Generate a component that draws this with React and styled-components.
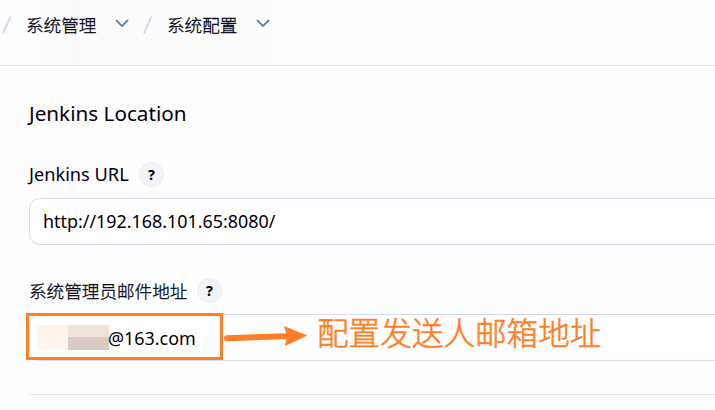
import styled, { createGlobalStyle } from 'styled-components'

const GlobalStyle = createGlobalStyle`
  * {
    box-sizing: border-box;
  }

  body {
    margin: 0;
    background: #fdfdfe;
    color: #14141f;
    font-family: "Noto Sans", "Noto Sans CJK SC", sans-serif;
  }
`

const Page = styled.div`
  height: 410px;
  overflow: hidden;
`

const Breadcrumbs = styled.header`
  display: flex;
  align-items: center;
  height: 66px;
  padding: 0 0 16px 2px;
  border-bottom: 1px solid #e4e6ec;
  background: linear-gradient(90deg, #fdfdfe 35px, #fafafa 70px, #fbfbfb 130px, #fcfcfc 200px, #fcfcfc 275px, #fdfdfe 276px);
`

const Crumb = styled.div`
  display: flex;
  align-items: center;
  width: 141px;
`

const Slash = styled.svg`
  width: 10px;
  height: 20px;
  margin-right: 14px;
`

const CrumbName = styled.span`
  width: 71px;
  font: 300 17.6px/26px "Noto Sans CJK SC", sans-serif;
  color: #000010;
  white-space: nowrap;
  -webkit-text-stroke: 0.3px #000010;
`

const Chevron = styled.svg`
  width: 14px;
  height: 9px;
  margin: 0 0 2px 18px;
`

const Main = styled.main`
  width: 760px;
  padding: 33px 0 0 29px;
`

const Title = styled.h1`
  height: 28px;
  margin: 0 0 35px;
  font-size: 20.7px;
  font-weight: 400;
  line-height: 28px;
  color: #000010;
`

const Label = styled.label`
  display: flex;
  align-items: center;
  height: 25px;
  margin-bottom: 11px;
  color: #000010;
`

const LabelText = styled.span`
  width: ${({ $width }) => $width};
  padding-bottom: 2px;
  font-size: 18.2px;
  white-space: nowrap;
`

const ChineseLabelText = styled(LabelText)`
  padding-bottom: 0;
  font: 300 17.6px/26px "Noto Sans CJK SC", sans-serif;
  -webkit-text-stroke: 0.3px #000010;
`

const Help = styled.span`
  display: flex;
  align-items: center;
  justify-content: center;
  width: 25px;
  height: 25px;
  border: 1px solid #e9edf2;
  border-radius: 50%;
  background: #f1f4f8;
  font: 700 14.5px/1 "Noto Sans", sans-serif;
`

const Field = styled.div`
  position: relative;
  display: flex;
  align-items: center;
  height: 47px;
  margin-bottom: 33px;
  padding-left: ${({ $indent }) => $indent};
  border: 1px solid #d4dbea;
  border-radius: 11px;
  background: #fff;
`

const Value = styled.span`
  padding-bottom: ${({ $lift }) => $lift || 0};
  font-size: 17.9px;
  line-height: 26px;
  color: #000;
`

const Mask = styled.span`
  display: grid;
  grid-template: 12px 13px / 31px 41px;
  margin-right: -1px;
`

const MaskCell = styled.span`
  background: ${({ $color }) => $color};
`

const Highlight = styled.div`
  position: absolute;
  top: -2px;
  left: -4px;
  width: 197px;
  height: 47px;
  border: 3px solid #ff7f27;
`

const Arrow = styled.svg`
  position: absolute;
  top: 10px;
  left: 193px;
  width: 86px;
  height: 24px;
`

const Note = styled.span`
  position: absolute;
  top: -6px;
  left: 287px;
  font: 300 31.6px/44px "Noto Sans CJK SC", sans-serif;
  color: #ff7f27;
  white-space: nowrap;
  -webkit-text-stroke: 0.6px #ff7f27;
`

const Divider = styled.hr`
  margin: 0;
  border: 0;
  border-top: 1px solid #e0e6ee;
`

const crumbs = ['系统管理', '系统配置']
const maskColors = ['#fff2e9', '#f0e3dc', '#fef5f1', '#d9cbc4']

export default function App() {
  return (
    <Page>
      <GlobalStyle />
      <Breadcrumbs>
        {crumbs.map((name) => (
          <Crumb key={name}>
            <Slash viewBox="0 0 10 20">
              <path d="M1 18.5 8.5 1.5" stroke="#d0dce9" strokeWidth="2" />
            </Slash>
            <CrumbName>{name}</CrumbName>
            <Chevron viewBox="0 0 14 9">
              <path d="m1.5 1.5 5.5 5.5 5.5-5.5" fill="none" stroke="#6789b5" strokeWidth="2" strokeLinecap="round" strokeLinejoin="round" />
            </Chevron>
          </Crumb>
        ))}
      </Breadcrumbs>
      <Main>
        <Title>Jenkins Location</Title>
        <Label>
          <LabelText $width="110px">Jenkins URL</LabelText>
          <Help>?</Help>
        </Label>
        <Field $indent="13px">
          <Value $lift="2px">http://192.168.101.65:8080/</Value>
        </Field>
        <Label>
          <ChineseLabelText $width="168px">系统管理员邮件地址</ChineseLabelText>
          <Help>?</Help>
        </Label>
        <Field $indent="7px">
          <Mask>
            {maskColors.map((color) => (
              <MaskCell key={color} $color={color} />
            ))}
          </Mask>
          <Value>@163.com</Value>
          <Highlight />
          <Arrow viewBox="0 0 86 24">
            <path d="M4 13.2 62 11.2" stroke="#ff7f27" strokeWidth="6" strokeLinecap="round" />
            <path d="M61 1 84.5 10.5 62 21 64 11Z" fill="#ff7f27" />
          </Arrow>
          <Note>配置发送人邮箱地址</Note>
        </Field>
        <Divider />
      </Main>
    </Page>
  )
}
